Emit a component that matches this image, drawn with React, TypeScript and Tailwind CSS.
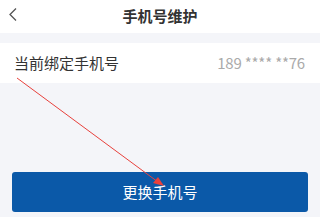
import React from 'react';

const font = { fontFamily: '"Noto Sans CJK SC", "Noto Sans", sans-serif' };

export default function App() {
  return (
    <div className="relative w-[320px] h-[217px] bg-[#f4f5f9] overflow-hidden" style={font}>
      <div className="relative flex items-center justify-center h-[33px] bg-white">
        <svg className="absolute left-[9px] top-[8px]" width="8" height="13" viewBox="0 0 8 13" fill="none">
          <polyline points="7,0.5 1,6.5 7,12.5" stroke="#555" strokeWidth="1.3" />
        </svg>
        <h1 className="text-[15px] font-bold text-[#333]">手机号维护</h1>
      </div>

      <div className="mt-[10px] flex items-center justify-between h-[40px] px-[14px] bg-white">
        <span className="text-[15px] text-[#333]">当前绑定手机号</span>
        <span className="text-[15px] text-[#aaa] pr-[1px] tracking-[-0.2px]">189 **** **76</span>
      </div>

      <div className="px-[12px] pt-[89px]">
        <button className="w-full h-[40px] rounded-[3px] bg-[#0b59a8] text-white text-[15px]">
          更换手机号
        </button>
      </div>

      <svg className="absolute inset-0 pointer-events-none" width="320" height="217">
        <line x1="17" y1="78" x2="158" y2="182" stroke="#e8413c" strokeWidth="1" />
        <polygon points="164,186 153,183 158,177" fill="#e8413c" />
      </svg>
    </div>
  );
}
